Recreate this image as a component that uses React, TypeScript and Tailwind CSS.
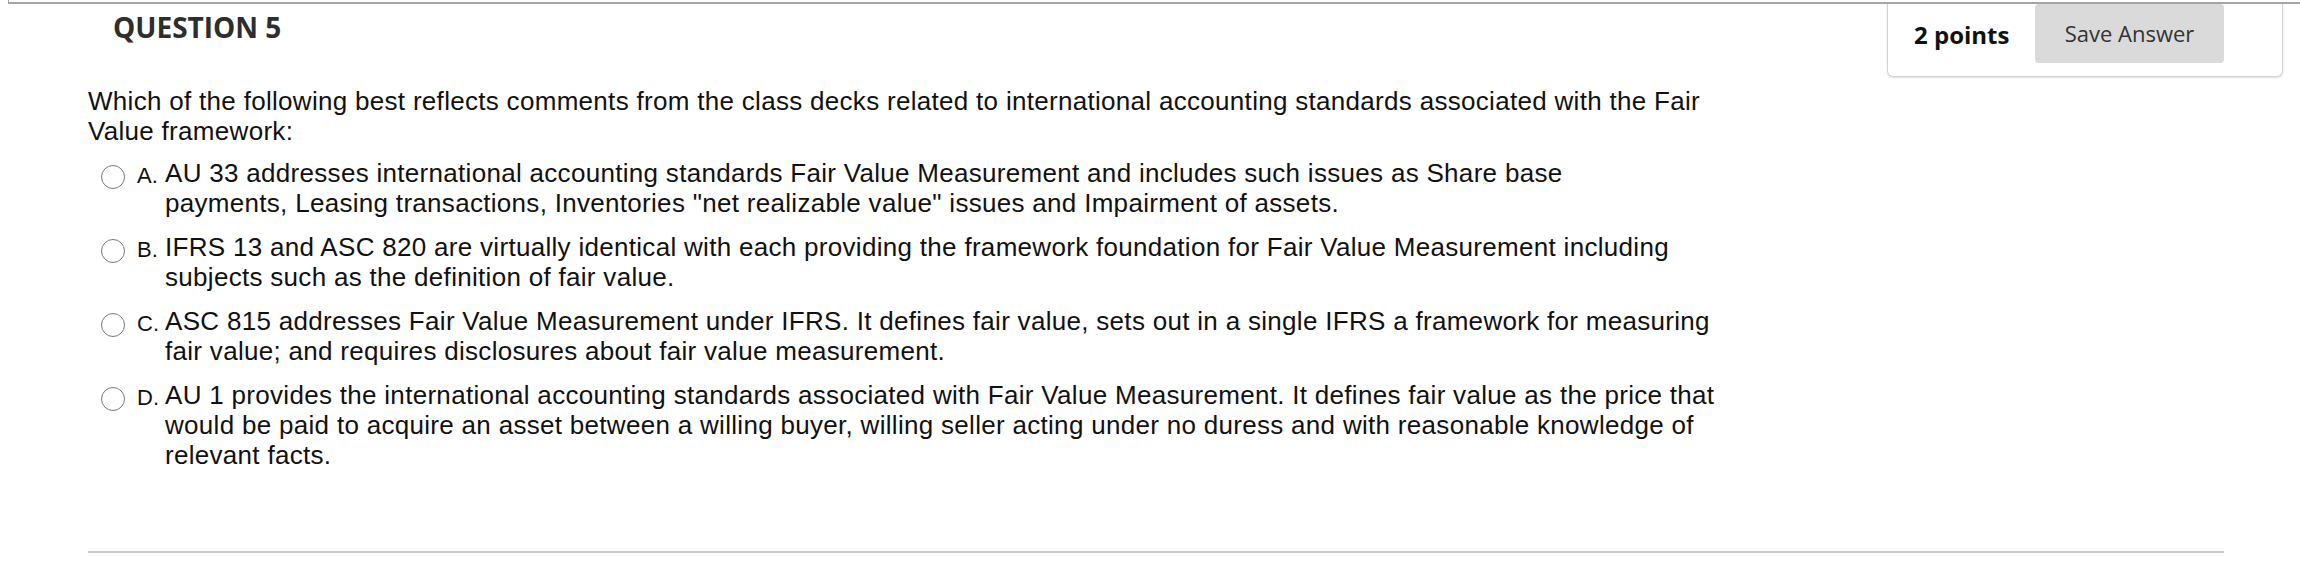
import React from "react";

const options = [
  {
    key: "A.",
    text: (
      <>
        AU 33 addresses international accounting standards Fair Value Measurement and includes such issues as Share base
        <br />
        payments, Leasing transactions, Inventories "net realizable value" issues and Impairment of assets.
      </>
    ),
  },
  {
    key: "B.",
    text: "IFRS 13 and ASC 820 are virtually identical with each providing the framework foundation for Fair Value Measurement including subjects such as the definition of fair value.",
  },
  {
    key: "C.",
    text: "ASC 815 addresses Fair Value Measurement under IFRS. It defines fair value, sets out in a single IFRS a framework for measuring fair value; and requires disclosures about fair value measurement.",
  },
  {
    key: "D.",
    text: "AU 1 provides the international accounting standards associated with Fair Value Measurement. It defines fair value as the price that would be paid to acquire an asset between a willing buyer, willing seller acting under no duress and with reasonable knowledge of relevant facts.",
  },
];

export default function App() {
  return (
    <div className="w-[2300px] h-[578px] bg-white overflow-hidden font-['Liberation_Sans',Arial,sans-serif]">
      {/* bottom edge of the previous question box */}
      <div className="ml-[8px] h-[4px] border-l border-b-2 border-[#a6a6a6]" />

      <div className="flex items-start h-[73px]">
        <h2 className="pl-[113px] pt-[4px] text-[28px] leading-[38px] font-bold text-[#2e2e2e] font-['Open_Sans',sans-serif]">
          QUESTION 5
        </h2>
        <div className="ml-auto mr-[17px] w-[396px] h-[73px] flex items-start border-x border-b border-[#d2d2d2] rounded-b-md shadow-[0_1px_2px_rgba(0,0,0,0.12)] font-['Open_Sans',sans-serif]">
          <span className="ml-[26px] w-[121px] shrink-0 mt-[15px] text-[24px] leading-[32px] font-bold text-[#111]">2 points</span>
          <button className="w-[189px] h-[59px] bg-[#dadada] rounded-[4px] text-[22px] text-[#333]">
            Save Answer
          </button>
        </div>
      </div>

      <div className="pl-[88px] w-[2224px] mt-[9px]">
        <p className="max-w-[1647px] text-[26px] tracking-[0.3px] leading-[30px] text-[#111]">
          Which of the following best reflects comments from the class decks related to international accounting standards associated with the Fair Value framework:
        </p>

        <div className="mt-[12px] flex flex-col gap-[14px] max-w-[1647px]">
          {options.map((o) => (
            <label key={o.key} className="flex items-start">
              <span className="ml-[13px] mt-[7px] w-[24px] h-[24px] shrink-0 rounded-full border-[1.5px] border-[#777] bg-white" />
              <span className="ml-[12px] w-[28px] shrink-0 mt-[3px] text-[22px] leading-[30px] text-[#111]">{o.key}</span>
              <span className="flex-1 text-[26px] tracking-[0.3px] leading-[30px] text-[#111]">{o.text}</span>
            </label>
          ))}
        </div>

        <div className="mt-[81px] h-[2px] bg-[#cacaca]" />
      </div>
    </div>
  );
}
